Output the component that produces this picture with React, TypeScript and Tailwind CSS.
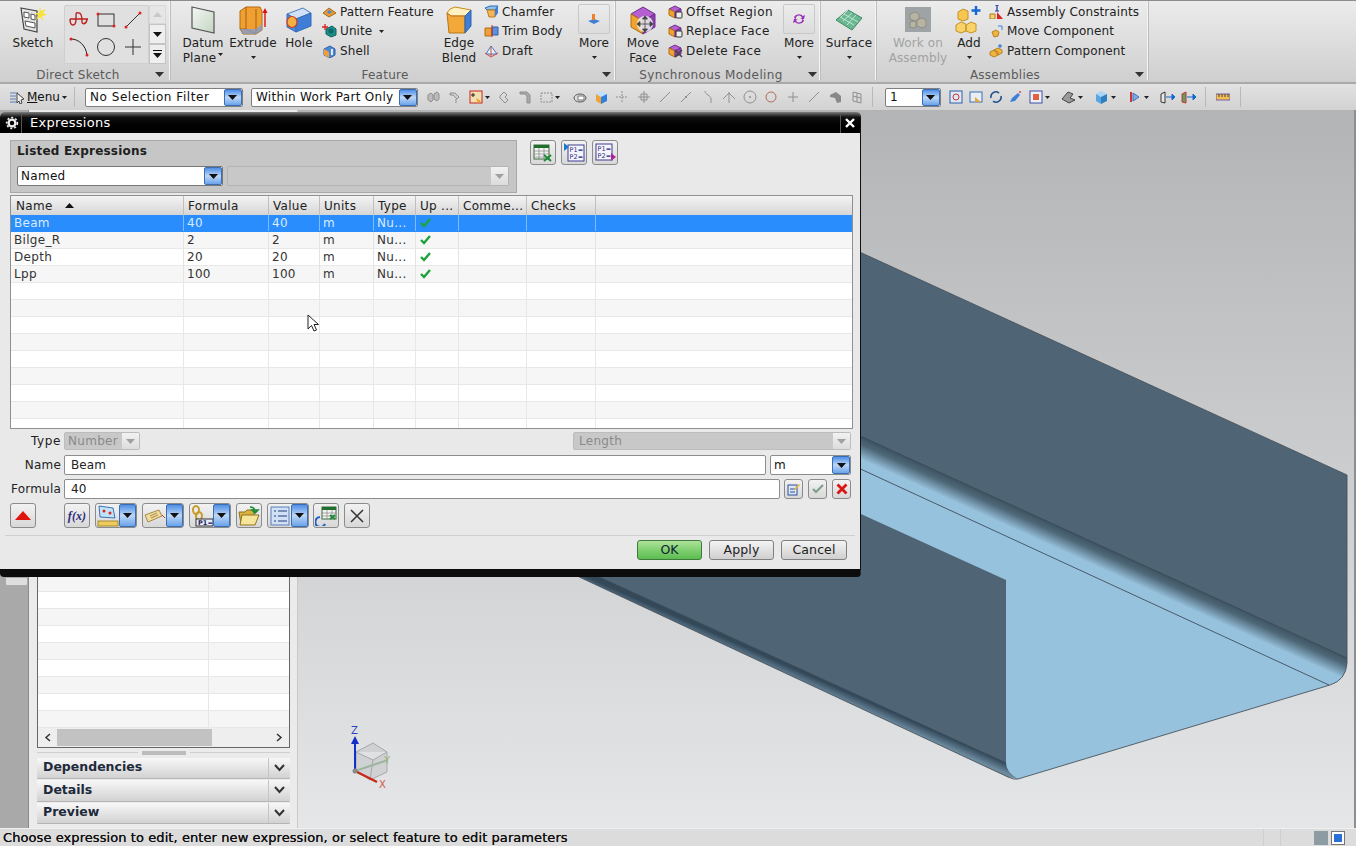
import type { ReactNode } from "react";

const rows = [
  { name: "Beam", formula: "40", value: "40" },
  { name: "Bilge_R", formula: "2", value: "2" },
  { name: "Depth", formula: "20", value: "20" },
  { name: "Lpp", formula: "100", value: "100" },
];
const blankRows = [0, 1, 2, 3, 4, 5, 6, 7, 8];
const panelRows = [0, 1, 2, 3, 4, 5, 6, 7, 8];

function Tri({ color = "#111" }: { color?: string }) {
  return (
    <svg width="9" height="5" viewBox="0 0 9 5">
      <path d="M0 0h9L4.5 5z" fill={color} />
    </svg>
  );
}

function Caret() {
  return (
    <svg width="5" height="3" viewBox="0 0 5 3" className="shrink-0">
      <path d="M0 0h5L2.5 3z" fill="#222" />
    </svg>
  );
}

function BlueDrop({ w = "w-[18px]" }: { w?: string }) {
  return (
    <div className={`${w} self-stretch shrink-0 flex items-center justify-center rounded-[2px] border border-[#3b6db5] bg-linear-to-b from-[#4f8fe6] via-[#bcd6f5] to-[#6aa3ea]`}>
      <Tri />
    </div>
  );
}

function GrayDrop() {
  return (
    <div className="w-[18px] self-stretch shrink-0 flex items-center justify-center border-l border-[#c9c9c9] bg-linear-to-b from-[#f2f2f2] to-[#dcdcdc]">
      <Tri color="#a0a0a0" />
    </div>
  );
}

/* ---------- ribbon icons ---------- */

function SketchIcon() {
  return (
    <svg width="30" height="28" viewBox="0 0 30 28">
      <path d="M3 2l16 3v21L6 23z" fill="#e4e4e4" stroke="#444" strokeWidth="1.2" />
      <path d="M6 6l5 1v5l-5-1zM13 8l4 1v5l-4-1zM7 15l10 2v5L8 20z" fill="#fff" stroke="#555" />
      <path d="M22 0l1 5 5-2-3 4 4 2-5 1 1 5-3-4-4 3 2-5-4-2 5 0z" fill="#f7e33a" />
    </svg>
  );
}

function DatumIcon() {
  return (
    <svg width="26" height="28" viewBox="0 0 26 28">
      <defs>
        <linearGradient id="dp" x1="0" y1="0" x2="1" y2="1">
          <stop offset="0" stopColor="#f4f7f3" />
          <stop offset="1" stopColor="#c3d5c3" />
        </linearGradient>
      </defs>
      <path d="M2 1l22 5v21L2 22z" fill="url(#dp)" stroke="#555" strokeWidth="1.2" />
    </svg>
  );
}

function ExtrudeIcon() {
  return (
    <svg width="32" height="30" viewBox="0 0 32 30">
      <path d="M3 6l6-4h14l2 4v19l-6 4H6l-3-5z" fill="#f0a030" stroke="#b46a10" />
      <path d="M9 2v22M19 4v25M3 24l6 0 10 5" fill="none" stroke="#a85f10" />
      <path d="M3 24l16 0 6-5v6l-6 4H6z" fill="#7d9ed6" opacity=".75" />
      <path d="M28 22V7" stroke="#d11" strokeWidth="1.4" />
      <path d="M25.5 8L28 3l2.5 5z" fill="#d11" />
    </svg>
  );
}

function HoleIcon() {
  return (
    <svg width="28" height="28" viewBox="0 0 28 28">
      <path d="M2 8l16-6 8 5-15 6z" fill="#cfe0f7" stroke="#4a7ec2" />
      <path d="M2 8l9 5v13l-9-5z" fill="#4d8be0" stroke="#356dba" />
      <path d="M11 13l15-6v13l-15 6z" fill="#3f7dd6" stroke="#356dba" />
      <ellipse cx="7" cy="16" rx="5" ry="5.5" fill="#f4b042" stroke="#d03a18" strokeWidth="1.2" />
    </svg>
  );
}

function BlendIcon() {
  return (
    <svg width="28" height="30" viewBox="0 0 28 30">
      <path d="M2 8q2-5 8-6l16 3-6 6H6z" fill="#fff2c0" stroke="#c88a20" />
      <path d="M2 8l4 3h14v17H4z" fill="#f2a93a" stroke="#b87515" />
      <path d="M20 11l6-6v16l-6 7z" fill="#3f7fd8" stroke="#2e63ad" />
    </svg>
  );
}

function MoveFaceIcon() {
  return (
    <svg width="28" height="30" viewBox="0 0 28 30">
      <path d="M2 9l12-7 12 7-12 7z" fill="#b65fd0" stroke="#6e2e8e" />
      <path d="M2 9l12 7v13L2 22z" fill="#f0a32e" stroke="#b06f10" />
      <path d="M14 16l12-7v13l-12 7z" fill="#8a3fb0" stroke="#6e2e8e" />
      <circle cx="16" cy="19" r="8" fill="#e8e8e8" opacity=".9" />
      <path d="M16 12v14M9 19h14M16 11l-2.5 3h5zM16 27l-2.5-3h5zM8 19l3-2.5v5zM24 19l-3-2.5v5z" fill="#444" stroke="#444" strokeWidth=".8" />
    </svg>
  );
}

function SurfaceIcon() {
  return (
    <svg width="28" height="22" viewBox="0 0 28 22">
      <path d="M1 11L13 1l14 8-10 12z" fill="#69b892" stroke="#3d8a66" />
      <path d="M5 8l14 8M9 5l14 8M13 1l-7 7M17 4l-9 8M21 6l-9 10" stroke="#d8efe2" strokeWidth=".8" fill="none" />
    </svg>
  );
}

function WorkOnIcon() {
  return (
    <svg width="26" height="25" viewBox="0 0 26 25">
      <rect width="26" height="25" fill="#9ea3a6" />
      <path d="M5 7l5-2 4 2v5l-4 2-5-2zM12 13l5-2 4 2v6l-4 2-5-2zM5 15l4-1 2 1v5l-3 1-3-1z" fill="#b9b3a2" stroke="#8e8e86" />
    </svg>
  );
}

function AddIcon() {
  return (
    <svg width="28" height="30" viewBox="0 0 28 30">
      <path d="M3 7l5-3 5 2v8l-5 2-5-2z" fill="#f7c64f" stroke="#c6912a" />
      <path d="M1 20l5-3 5 2v7l-5 2-5-2zM11 20l5-3 5 2v7l-5 2-5-2z" fill="#f7d36a" stroke="#c6912a" />
      <path d="M21 1v9M16.5 5.5h9" stroke="#1469d2" strokeWidth="2.4" />
    </svg>
  );
}

function MoreBox({ children }: { children: ReactNode }) {
  return (
    <div className="w-[32px] h-[30px] flex items-center justify-center rounded-[2px] border border-[#c8c8c8] bg-linear-to-b from-[#ececec] to-[#dcdcdc]">
      {children}
    </div>
  );
}

function Small({ kind }: { kind: string }) {
  const common = { width: 15, height: 14, viewBox: "0 0 15 14" };
  switch (kind) {
    case "pattern":
      return (
        <svg {...common}>
          <path d="M1 8l6-5 7 5-7 4z" fill="#e69a32" stroke="#a9691a" />
          <path d="M5 7l2-2 3 2-3 2z" fill="#4c86d8" />
        </svg>
      );
    case "unite":
      return (
        <svg {...common}>
          <path d="M4 5l6-3 4 3v6l-5 2-5-3z" fill="#1c8f8a" stroke="#0d5f5c" />
          <circle cx="9" cy="7" r="2.6" fill="#0d6a66" />
          <path d="M3 0v6M0 3h6" stroke="#d22" strokeWidth="1.3" />
        </svg>
      );
    case "shell":
      return (
        <svg {...common}>
          <path d="M2 5l6-3 5 3v6l-5 3-6-3z" fill="#4d88d8" stroke="#2d5fa6" />
          <path d="M2 5l5 3v6l-5-3z" fill="#ef9f38" />
          <path d="M9 5h2v6H9z" fill="#e4e9f3" />
        </svg>
      );
    case "chamfer":
      return (
        <svg {...common}>
          <path d="M1 3l5-2h8l-3 4H3z" fill="#8fc0ea" stroke="#2f6db5" />
          <path d="M3 5h8v7H5z" fill="#f4b458" stroke="#c07c18" />
          <path d="M11 5l3-4v7l-3 4z" fill="#3f7fd8" />
        </svg>
      );
    case "trim":
      return (
        <svg {...common}>
          <path d="M1 4h7v8H1z" fill="#ef9f38" stroke="#b06f10" />
          <path d="M8 3h6v8H8z" fill="#5b93de" stroke="#2d5fa6" />
          <path d="M8 1v12" stroke="#d22" />
        </svg>
      );
    case "draft":
      return (
        <svg {...common}>
          <path d="M2 10L7 2l6 8z" fill="#eef2f8" stroke="#4278c2" />
          <path d="M7 2v10M1 9l6 4 7-4" fill="none" stroke="#cf4a4a" />
        </svg>
      );
    case "offset":
    case "replace":
    case "delete":
      return (
        <svg {...common}>
          <path d="M1 4l6-3 6 3-6 3z" fill="#b65fd0" stroke="#6e2e8e" />
          <path d="M1 4l6 3v6l-6-3z" fill="#f0a32e" stroke="#b06f10" />
          <path d="M7 7l6-3v6l-6 3z" fill="#9a48bc" stroke="#6e2e8e" />
          {kind === "delete" ? (
            <path d="M7 6l7 7M14 6l-7 7" stroke="#444" strokeWidth="1.5" />
          ) : (
            <rect x="8" y="7" width="6" height="6" rx="1" fill="#eee" stroke="#333" />
          )}
        </svg>
      );
    case "constraints":
      return (
        <svg {...common}>
          <path d="M6 0h4M8 0v6M6 6h4" stroke="#1c2f9e" strokeWidth="1.2" />
          <path d="M1 9h5v5H1z" fill="#f7d36a" stroke="#a87b1e" />
          <path d="M8 14V7l6 7z" fill="#d22" />
        </svg>
      );
    case "move":
      return (
        <svg {...common}>
          <path d="M3 8l4-2 3 2-1 4-4 1z" fill="#efb53e" stroke="#b58020" />
          <path d="M9 2h4v4" fill="none" stroke="#3f7fd8" />
        </svg>
      );
    default:
      return (
        <svg {...common}>
          <path d="M1 8l4-2 4 2v3l-4 2-4-2zM5 6l4-2 4 2v3l-4 2z" fill="#efb53e" stroke="#b58020" />
          <path d="M11 0v4M9 2h4" stroke="#1469d2" />
        </svg>
      );
  }
}

/* ---------- ribbon pieces ---------- */

function Big({ w, icon, lines, caret, caretInline, ml = 0, dim }: { w: number; icon: ReactNode; lines: string[]; caret?: boolean; caretInline?: boolean; ml?: number; dim?: boolean }) {
  return (
    <div className="flex flex-col items-center shrink-0" style={{ width: w, marginLeft: ml }}>
      <div className="h-[31px] mt-[3px] flex items-center justify-center">{icon}</div>
      <div className={`mt-[1px] text-center leading-[14.5px] whitespace-nowrap ${dim ? "text-[#a2a2a2]" : "text-[#222]"}`}>
        {lines.map((l, i) => (
          <div key={l} className="flex items-center justify-center gap-[2px]">
            {l}
            {caretInline && i === lines.length - 1 && <span className="mb-[6px]"><Caret /></span>}
          </div>
        ))}
      </div>
      {caret && <div className="mt-[5px] flex"><Caret /></div>}
    </div>
  );
}

function List({ items, w, ml = 0, wide }: { items: { k: string; t: string; caret?: boolean }[]; w: number; ml?: number; wide?: boolean }) {
  return (
    <div className={`flex flex-col mt-[1px] shrink-0 ${wide ? "tracking-[0.45px]" : ""}`} style={{ width: w, marginLeft: ml }}>
      {items.map((it) => (
        <div key={it.t} className="h-[19.5px] flex items-center gap-[3px] text-[#222] whitespace-nowrap">
          <Small kind={it.k} />
          {it.t}
          {it.caret && <span className="ml-[4px] flex"><Caret /></span>}
        </div>
      ))}
    </div>
  );
}

function GroupLabel({ label, box, gap, wide }: { label: string; box: number; gap: number; wide?: boolean }) {
  return (
    <div className="h-[17px] shrink-0 flex items-center text-[#5a5a5a]">
      <span className={`text-center whitespace-nowrap ${wide ? "tracking-[0.4px]" : "tracking-[0.25px]"}`} style={{ width: box }}>{label}</span>
      <span style={{ marginLeft: gap }} className="flex"><Tri color="#333" /></span>
    </div>
  );
}

function Group({ w, children, label }: { w: number; children: ReactNode; label?: ReactNode }) {
  return (
    <div className="flex flex-col shrink-0 border-r border-[#f4f4f4] shadow-[1px_0_0_#bdbdbd] mr-[2px] mb-[2px]" style={{ width: w }}>
      <div className="h-[65px] shrink-0 flex items-start">{children}</div>
      {label}
    </div>
  );
}

function Ribbon() {
  return (
    <div className="h-[84px] shrink-0 flex border-t border-[#8c8c8c] border-b-2 border-b-[#a9a9a9] bg-linear-to-b from-[#ececec] to-[#cfcfcf] text-[12px] tracking-[0.1px]">
      <Group w={170} label={<GroupLabel label="Direct Sketch" box={156} gap={-1} />}>
        <Big w={46} ml={10} icon={<SketchIcon />} lines={["Sketch"]} />
        <div className="ml-[8px] mt-[4px] w-[85px] h-[59px] pb-[3px] pr-[2px] grid grid-cols-3 grid-rows-2 place-items-center rounded-[2px] border border-[#cfcfcf] bg-[#e0e0e0]">
          <svg width="20" height="20" viewBox="0 0 20 20"><path d="M1 9c0 8 6 8 6 0S7 3 10 3s3 6 3 9 5 2 5-3M1 9h18" fill="none" stroke="#b22" strokeWidth="1.4" /></svg>
          <svg width="20" height="16" viewBox="0 0 20 16"><rect x="2" y="2" width="16" height="12" fill="none" stroke="#333" /><circle cx="2" cy="2" r="1.5" fill="#d22" /><circle cx="18" cy="14" r="1.5" fill="#d22" /></svg>
          <svg width="18" height="18" viewBox="0 0 18 18"><path d="M2 16L16 2" stroke="#333" /><circle cx="2" cy="16" r="1.5" fill="#d22" /><circle cx="16" cy="2" r="1.5" fill="#d22" /></svg>
          <svg width="20" height="20" viewBox="0 0 20 20"><path d="M2 2c8 0 15 7 16 16" fill="none" stroke="#222" /><circle cx="2" cy="2" r="1.5" fill="#d22" /><circle cx="18" cy="18" r="1.5" fill="#d22" /></svg>
          <svg width="20" height="20" viewBox="0 0 20 20"><circle cx="10" cy="10" r="8.5" fill="none" stroke="#333" /></svg>
          <svg width="18" height="18" viewBox="0 0 18 18"><path d="M9 1v16M1 9h16" stroke="#333" /></svg>
        </div>
        <div className="w-[17px] mt-[4px] h-[59px] flex flex-col">
          <div className="h-[19px] flex items-center justify-center bg-[#e6e6e6] border border-[#d8d8d8]"><span className="rotate-180 flex"><Tri color="#c8c8c8" /></span></div>
          <div className="h-[20px] flex items-center justify-center bg-[#eeeeee] border border-[#c4c4c4]"><Tri /></div>
          <div className="h-[20px] flex flex-col items-center justify-center bg-[#eeeeee] border border-[#c4c4c4]"><div className="w-[9px] h-[1px] bg-[#111] mb-[2px]" /><Tri /></div>
        </div>
      </Group>
      <Group w={443} label={<GroupLabel label="Feature" box={426} gap={4} />}>
        <Big w={42} ml={10} icon={<DatumIcon />} lines={["Datum", "Plane"]} caretInline />
        <Big w={48} ml={5} icon={<ExtrudeIcon />} lines={["Extrude"]} caret />
        <Big w={32} ml={6} icon={<HoleIcon />} lines={["Hole"]} />
        <List w={115} ml={7} items={[{ k: "pattern", t: "Pattern Feature" }, { k: "unite", t: "Unite", caret: true }, { k: "shell", t: "Shell" }]} />
        <Big w={38} ml={3} icon={<BlendIcon />} lines={["Edge", "Blend"]} />
        <List w={91} ml={6} items={[{ k: "chamfer", t: "Chamfer" }, { k: "trim", t: "Trim Body" }, { k: "draft", t: "Draft" }]} />
        <div className="flex flex-col items-center w-[34px] ml-[2px] mt-[3px]">
          <MoreBox><svg width="14" height="14" viewBox="0 0 14 14"><path d="M1 9l6-2 6 2-6 3z" fill="#3f7fd8" /><path d="M5 2h3v6H5z" fill="#ef7f28" /></svg></MoreBox>
          <div className="mt-[2px] leading-[14.5px] text-[#222]">More</div>
          <div className="mt-[5px] flex"><Caret /></div>
        </div>
      </Group>
      <Group w={203} label={<GroupLabel label="Synchronous Modeling" box={188} gap={3} wide />}>
        <Big w={36} ml={8} icon={<MoveFaceIcon />} lines={["Move", "Face"]} />
        <List w={114} ml={7} wide items={[{ k: "offset", t: "Offset Region" }, { k: "replace", t: "Replace Face" }, { k: "delete", t: "Delete Face" }]} />
        <div className="flex flex-col items-center w-[34px] mt-[3px]">
          <MoreBox><svg width="14" height="12" viewBox="0 0 14 12"><path d="M2 5a5 4 0 0 1 9-2l2-1-1 4H8l2-1a3 3 0 0 0-6 1zM12 7a5 4 0 0 1-9 2l-2 1 1-4h4L4 7a3 3 0 0 0 6-1z" fill="#9a30b8" /></svg></MoreBox>
          <div className="mt-[2px] leading-[14.5px] text-[#222]">More</div>
          <div className="mt-[5px] flex"><Caret /></div>
        </div>
      </Group>
      <Group w={54}>
        <Big w={54} icon={<SurfaceIcon />} lines={["Surface"]} caret />
      </Group>
      <Group w={270} label={<GroupLabel label="Assemblies" box={254} gap={3} />}>
        <Big w={60} ml={10} dim icon={<WorkOnIcon />} lines={["Work on", "Assembly"]} />
        <Big w={34} ml={4} icon={<AddIcon />} lines={["Add"]} caret />
        <List w={152} ml={3} items={[{ k: "constraints", t: "Assembly Constraints" }, { k: "move", t: "Move Component" }, { k: "patternc", t: "Pattern Component" }]} />
      </Group>
    </div>
  );
}

/* ---------- toolbar ---------- */

function Glyph({ k }: { k: number }) {
  const s = "#8f8f8f";
  const paths: ReactNode[] = [
    <path key="a" d="M2 10V5l3-2 2 2v5l-2 2zM8 9V4l3-2 2 2v5l-2 2z" fill="#bbb" stroke={s} />,
    <path key="b" d="M3 3h5l4 4-2 2-4-4H3zM9 9v4" fill="#cfcfcf" stroke={s} />,
    <g key="c"><rect x="1" y="1" width="12" height="12" fill="#f3e0b0" stroke="#c22" /><path d="M4 3v4M2 5h4" stroke="#222" /><path d="M7 8l5 3-3 2z" fill="#e9a326" /></g>,
    <path key="d" d="M3 6l4-4 3 3-2 2 3 3-3 3-5-5z" fill="none" stroke={s} />,
    <path key="e" d="M2 4h5l2 2v7h3V5L9 2H2z" fill="#aaa" stroke={s} />,
    <rect key="f" x="2" y="3" width="11" height="9" fill="none" stroke={s} strokeDasharray="2 1" />,
    <g key="g"><ellipse cx="7" cy="8" rx="6" ry="4" fill="#ddd" stroke="#555" /><path d="M5 6h6v4H5z" fill="#fff" stroke="#777" /></g>,
    <g key="h"><path d="M2 4l5-3 6 3-6 3z" fill="#bfe0ff" /><path d="M2 4l5 3v7l-5-3z" fill="#f1a433" /><path d="M7 7l6-3v7l-6 3z" fill="#2f7ee0" /></g>,
    <path key="i" d="M7 1v12M1 7h12" stroke={s} strokeDasharray="2 1" />,
    <path key="j" d="M7 1v12M1 7h12M4 4h6v6H4z" fill="none" stroke={s} />,
    <path key="k" d="M2 12L12 2" stroke={s} />,
    <path key="l" d="M2 12L12 2M6 6l2 2" stroke={s} />,
    <path key="m" d="M4 1c0 4 6 4 6 8v4" fill="none" stroke={s} />,
    <path key="n" d="M7 2v11M1 9l6-6 6 6" fill="none" stroke={s} />,
    <g key="o"><circle cx="7" cy="7" r="6" fill="none" stroke={s} /><circle cx="7" cy="7" r="1" fill={s} /></g>,
    <circle key="p" cx="7" cy="7" r="5" fill="none" stroke="#b06a5a" />,
    <path key="q" d="M7 2v10M2 7h10" stroke={s} />,
    <path key="r" d="M2 12L12 2" stroke={s} />,
    <path key="s" d="M2 5l6-3 5 4v6l-4 1-2-5-5-1z" fill="#888" />,
    <path key="t" d="M3 2l8 2v9l-8-2zM3 6l8 2M7 3v9" fill="none" stroke={s} />,
  ];
  return <svg width="14" height="14" viewBox="0 0 14 14">{paths[k]}</svg>;
}

function SelectBox({ text, w, ml = 0, track }: { text: string; w: number; ml?: number; track: string }) {
  return (
    <div className="h-[19px] flex items-center rounded-[2px] border border-[#7f7f7f] bg-white text-[#111] pl-[4px] shrink-0" style={{ width: w, marginLeft: ml }}>
      <span className={`flex-1 whitespace-nowrap ${track}`}>{text}</span>
      <BlueDrop />
    </div>
  );
}

function Sep({ ml = 0 }: { ml?: number }) {
  return <div className="w-[1px] h-[20px] bg-[#b8b8b8] shrink-0" style={{ marginLeft: ml }} />;
}

const RIGHT_ICONS: ReactNode[] = [
  <svg key="a" width="14" height="14" viewBox="0 0 14 14"><rect x="1" y="1" width="12" height="12" fill="#dfe8f5" stroke="#2d5fa6" /><circle cx="7" cy="7" r="3" fill="none" stroke="#c33" /></svg>,
  <svg key="b" width="14" height="14" viewBox="0 0 14 14"><rect x="1" y="2" width="12" height="10" fill="#e8edf6" stroke="#3d6fb8" /><path d="M6 7l6 5H6z" fill="#e3a63a" /></svg>,
  <svg key="c" width="14" height="14" viewBox="0 0 14 14"><path d="M2 8a5 5 0 0 1 8-5M12 6a5 5 0 0 1-8 5" fill="none" stroke="#224e8f" strokeWidth="1.6" /></svg>,
  <svg key="d" width="14" height="14" viewBox="0 0 14 14"><path d="M1 12l2-4 6-5 2 2-5 6z" fill="#3f7fd8" /><circle cx="11" cy="2" r="1" fill="#d44" /></svg>,
  <svg key="e" width="14" height="14" viewBox="0 0 14 14"><rect x="1" y="1" width="12" height="12" fill="#eef0f8" stroke="#3d4fa8" /><rect x="4" y="4" width="6" height="6" fill="#e3603a" /></svg>,
  <svg key="f" width="15" height="14" viewBox="0 0 15 14"><path d="M1 9l6-7 5 2-3 4 5 2-6 3z" fill="#9a9a9a" stroke="#444" /></svg>,
  <svg key="g" width="15" height="14" viewBox="0 0 15 14"><path d="M2 4l5-3 6 3-6 3z" fill="#a8d4f5" /><path d="M2 4l5 3v7l-5-3z" fill="#5aa5e0" /><path d="M7 7l6-3v7l-6 3z" fill="#2f7ec0" /></svg>,
  <svg key="h" width="15" height="14" viewBox="0 0 15 14"><path d="M4 2v10" stroke="#c33" strokeWidth="2" /><path d="M6 3l6 4-6 4z" fill="#7ab0e6" stroke="#3d6fb8" /></svg>,
  <svg key="i" width="15" height="14" viewBox="0 0 15 14"><path d="M1 4l4-2v11l-4-1z" fill="#e8e8e8" stroke="#333" /><path d="M6 7h6M12 4l3 3-3 3z" fill="#1469d2" stroke="#1469d2" /></svg>,
  <svg key="j" width="15" height="14" viewBox="0 0 15 14"><path d="M1 4l4-2v11l-4-1z" fill="#5aa064" stroke="#c33" /><path d="M6 7h6M12 4l3 3-3 3z" fill="#1469d2" stroke="#1469d2" /></svg>,
];

function Toolbar() {
  return (
    <div className="h-[26px] shrink-0 flex items-center bg-linear-to-b from-[#e2e2e2] to-[#d2d2d2] text-[12px]">
      <svg width="15" height="13" viewBox="0 0 15 13" className="ml-[10px]"><path d="M0 2h8M0 5h6M0 8h6M0 11h8" stroke="#5a7fb5" /><path d="M7 2l7 6-3 1 1 3-2 1-1-3-2 2z" fill="#eee" stroke="#444" /></svg>
      <span className="ml-[2px] text-[#111]"><span className="underline">M</span>enu</span>
      <span className="ml-[2px] flex"><Caret /></span>
      <Sep ml={7} />
      <SelectBox text="No Selection Filter" w={158} ml={10} track="tracking-[0.55px]" />
      <SelectBox text="Within Work Part Only" w={167} ml={8} track="tracking-[0.3px]" />
      <div className="ml-[8px] flex items-center w-[446px] gap-[7.3px]">
        {[0, 1, 2, 3, 4, 5, 6, 7, 8, 9, 10, 11, 12, 13, 14, 15, 16, 17, 18, 19].map((k) => (
          <span key={k} className={`flex items-center gap-[2px] ${k === 5 ? "mr-[5px]" : ""}`}>
            <Glyph k={k} />
            {(k === 2 || k === 5) && <Caret />}
          </span>
        ))}
      </div>
      <Sep ml={0} />
      <div className="ml-[12px] w-[56px] h-[19px] flex items-center rounded-[2px] border border-[#7f7f7f] bg-white pl-[4px] text-[#111] shrink-0">
        <span className="flex-1">1</span>
        <BlueDrop />
      </div>
      <div className="ml-[8px] flex items-center gap-[6px] w-[256px]">
        {RIGHT_ICONS.map((ic, i) => (
          <span key={i} className={`flex items-center gap-[2px] ${i >= 4 && i <= 7 ? "mr-[5px]" : ""}`}>
            {ic}
            {i >= 4 && i <= 7 && <Caret />}
          </span>
        ))}
      </div>
      <Sep ml={0} />
      <svg width="14" height="12" viewBox="0 0 14 12" className="ml-[10px]"><rect x="0" y="3" width="14" height="6" fill="#f1c04e" stroke="#7d5aa8" /><path d="M3 3v3M6 3v3M9 3v3M12 3v3" stroke="#444" /></svg>
      <Sep ml={10} />
    </div>
  );
}

/* ---------- left pane ---------- */

function Accordion({ label }: { label: string }) {
  return (
    <div className="h-[21.5px] mb-[1px] flex items-center rounded-[1px] bg-linear-to-b from-[#f8f8f8] to-[#d2d2d2] border-b border-[#b5b5b5]">
      <span className="flex-1 pl-[6px] font-bold text-[#1d2a3a] text-[12.5px]">{label}</span>
      <span className="w-[22px] self-stretch flex items-center justify-center border-l border-[#c4c4c4]">
        <svg width="11" height="8" viewBox="0 0 11 8"><path d="M1 1l4.5 5L10 1" fill="none" stroke="#333" strokeWidth="2" /></svg>
      </span>
    </div>
  );
}

function LeftPane() {
  return (
    <div className="w-[298px] shrink-0 flex border-r border-[#c9c9c9]">
      <div className="w-[29px] shrink-0 bg-[#a9a9a9] border-r border-[#8a8a8a]" />
      <div className="flex-1 flex flex-col justify-end bg-[#ebebeb] pl-[8px] pr-[7px] pb-[3px]">
        <div className="border border-[#666] bg-white">
          {panelRows.map((r) => (
            <div key={r} className={`h-[17px] flex border-b border-[#e8e8e8] ${r % 2 === 1 ? "bg-white" : "bg-[#f5f5f5]"}`}>
              <div className="w-[171px] border-r border-[#e6e6e6]" />
            </div>
          ))}
          <div className="h-[19px] flex items-center bg-[#eeeeee]">
            <span className="w-[19px] text-center">
              <svg width="7" height="9" viewBox="0 0 7 9" className="inline"><path d="M6 1L2 4.5 6 8" fill="none" stroke="#333" strokeWidth="1.5" /></svg>
            </span>
            <div className="w-[155px] h-[17px] bg-[#c2c2c2]" />
            <span className="flex-1" />
            <span className="w-[19px] text-center">
              <svg width="7" height="9" viewBox="0 0 7 9" className="inline"><path d="M1 1l4 3.5L1 8" fill="none" stroke="#333" strokeWidth="1.5" /></svg>
            </span>
          </div>
        </div>
        <div className="h-[10px] flex items-center justify-center gap-[4px]">
          <div className="flex-1 h-[1px] bg-[#cfcfcf]" />
          <div className="w-[44px] h-[4px] bg-[#bcbcbc]" />
          <div className="flex-1 h-[1px] bg-[#cfcfcf]" />
        </div>
        <Accordion label="Dependencies" />
        <Accordion label="Details" />
        <Accordion label="Preview" />
      </div>
    </div>
  );
}

/* ---------- viewport ---------- */

function Viewport() {
  return (
    <div className="flex-1 relative bg-linear-to-b from-[#b3b4b6] via-[#d6d7d8] via-70% to-[#e5e6e7] border-r-2 border-[#8d8e90]">
      <svg className="absolute inset-0" width="1056" height="718" viewBox="298 110 1056 718">
        <defs>
          <linearGradient id="fillet" gradientUnits="userSpaceOnUse" x1="860" y1="436" x2="847.6" y2="463.3">
            <stop offset="0" stopColor="#3c5363" />
            <stop offset="0.25" stopColor="#4f6878" />
            <stop offset="0.7" stopColor="#97c2de" />
          </linearGradient>
          <linearGradient id="fillet2" gradientUnits="userSpaceOnUse" x1="950" y1="738" x2="946" y2="747">
            <stop offset="0" stopColor="#33495a" />
            <stop offset="1" stopColor="#6d8a9f" />
          </linearGradient>
        </defs>
        <path d="M700 179L1347 475V658L700 363Z" fill="#4f6474" />
        <path d="M700 363L1347 658V663Q1346 680 1330 685L700 395Z" fill="url(#fillet)" />
        <path d="M700 395L1330 685L1018 779Q1012 778 1006 770L575 400Z" fill="#97c2de" />
        <path d="M575 384L1006 580V763L575 566Z" fill="#4f6474" />
        <path d="M575 566L1006 763Q1006 772 1018 779L1008 777L575 575Z" fill="url(#fillet2)" />
        <path d="M700 363L1347 658M700 395L1329 685" stroke="#2c3f4d" strokeWidth="0.8" fill="none" />
        <path d="M575 566L1006 763" stroke="#2c3f4d" strokeWidth="0.8" fill="none" />
        <path d="M575 575L1008 777Q1014 780 1018 779L1330 685Q1346 680 1347 663V475L700 179" stroke="#48545c" strokeWidth="0.9" fill="none" />
        <path d="M373 743l14 9v20l-17 8-14-10v-18zM356 752l17 8 14-8M373 760l-3 20" fill="#c4c6c8" fillOpacity=".6" stroke="#a6a8aa" strokeWidth="1" />
        <path d="M355 771L388 760" stroke="#9db59f" strokeWidth="2" />
        <path d="M355 771V742" stroke="#1230c8" strokeWidth="2" />
        <path d="M351 744l4-8 4 8z" fill="#1230c8" />
        <path d="M355 771L377 782" stroke="#c8281c" strokeWidth="2.5" />
        <circle cx="355" cy="771" r="2.5" fill="#888" />
        <text x="351" y="734" fontSize="10" fill="#2a3fc8" fontFamily="DejaVu Sans">Z</text>
        <text x="379" y="788" fontSize="10" fill="#d0584c" fontFamily="DejaVu Sans">X</text>
        <text x="384" y="764" fontSize="10" fill="#9fb57a" fontFamily="DejaVu Sans">Y</text>
      </svg>
    </div>
  );
}

/* ---------- dialog ---------- */

function ToolBtn({ children, w = "w-[26px]", h = "h-[25px]" }: { children?: ReactNode; w?: string; h?: string }) {
  return (
    <div className={`${w} ${h} shrink-0 flex items-center justify-center rounded-[3px] border border-[#8b8b8b] bg-linear-to-b from-[#f2f2f2] to-[#d8d8d8]`}>
      {children}
    </div>
  );
}

function Combo({ children }: { children: ReactNode }) {
  return (
    <div className="w-[42px] h-[25px] shrink-0 flex rounded-[3px] border border-[#8b8b8b] bg-linear-to-b from-[#f2f2f2] to-[#d8d8d8]">
      <div className="flex-1 flex items-center justify-center">{children}</div>
      <BlueDrop w="w-[17px]" />
    </div>
  );
}

const cols = [173, 85, 51, 54, 42, 43, 68, 69];
const heads = ["Name", "Formula", "Value", "Units", "Type", "Up ...", "Comme...", "Checks"];

function ExprTable() {
  return (
    <div className="mx-[10px] mt-[2px] w-[843px] h-[234px] border border-[#8f8f8f] bg-white overflow-hidden shrink-0">
      <div className="h-[19px] flex bg-linear-to-b from-[#f4f4f4] to-[#d6d6d6] tracking-[0.3px]">
        {heads.map((h, i) => (
          <div key={h} className={`flex items-center border-r border-[#c0c0c0] whitespace-nowrap text-[#222] ${i === 0 ? "pl-[5px]" : "pl-[4px]"}`} style={{ width: cols[i] }}>
            {h}
            {i === 0 && <span className="ml-[12px] mb-[1px] rotate-180 flex"><Tri color="#111" /></span>}
          </div>
        ))}
        <div className="flex-1" />
      </div>
      {rows.map((r, i) => {
        const sel = i === 0;
        const line = sel ? "border-[#7fbcfb]" : "border-[#e4e4e4]";
        const tx = sel ? "text-[#d9ebff]" : "text-[#333]";
        return (
          <div key={r.name} className={`h-[17px] flex border-b tracking-[0.3px] ${sel ? "bg-[#2a8dfd] border-[#2a8dfd]" : i % 2 === 1 ? "bg-[#f6f6f6] border-[#e8e8e8]" : "bg-white border-[#e8e8e8]"} ${tx}`}>
            {[r.name, r.formula, r.value, "m", "Nu...", "", "", ""].map((c, j) => (
              <div key={j} className={`flex items-center pl-[3px] border-r ${line}`} style={{ width: cols[j] }}>
                {j === 5 ? (
                  <svg width="11" height="10" viewBox="0 0 11 10" className="ml-[1px]"><path d="M1 5l3 3 6-7" fill="none" stroke="#1ea23a" strokeWidth="2.4" /></svg>
                ) : c}
              </div>
            ))}
          </div>
        );
      })}
      {blankRows.map((b) => (
        <div key={b} className={`h-[17px] flex border-b border-[#e8e8e8] ${b % 2 === 1 ? "bg-[#f6f6f6]" : "bg-white"}`}>
          {cols.map((w, j) => (
            <div key={j} className="border-r border-[#e8e8e8]" style={{ width: w }} />
          ))}
        </div>
      ))}
    </div>
  );
}

function Field({ label, children }: { label: string; children: ReactNode }) {
  return (
    <div className="flex items-center">
      <span className="w-[61px] text-right text-[#222] whitespace-nowrap tracking-[0.2px]">{label}</span>
      <div className="ml-[3px] flex items-center">{children}</div>
    </div>
  );
}

function Dialog() {
  return (
    <div className="absolute left-0 top-[112px] w-[861px] h-[465px] flex flex-col rounded-t-[5px] rounded-b-[4px] overflow-hidden bg-[#e9e9e9] border-b-[8px] border-b-[#0c0c0c] border-r-[1px] border-r-[#111] text-[12px] tracking-[0.1px]">
      <div className="h-[21px] shrink-0 flex items-center bg-linear-to-b from-[#808080] via-[#111] via-25% to-[#000] text-white">
        <svg width="14" height="14" viewBox="0 0 14 14" className="ml-[5px]">
          <circle cx="7" cy="7" r="3.4" fill="none" stroke="#eee" strokeWidth="2.4" />
          <circle cx="7" cy="7" r="5.4" fill="none" stroke="#eee" strokeWidth="1.6" strokeDasharray="2 2" />
        </svg>
        <div className="ml-[2px] w-[1px] h-[20px] bg-[#555]" />
        <span className="ml-[8px] text-[13px] font-medium tracking-[0.3px]">Expressions</span>
        <span className="flex-1" />
        <div className="w-[1px] h-[20px] bg-[#555]" />
        <svg width="12" height="12" viewBox="0 0 12 12" className="mx-[3px] mr-[4px]"><path d="M2 2l8 8M10 2l-8 8" stroke="#fff" strokeWidth="2.4" /></svg>
      </div>

      <div className="mt-[7px] flex shrink-0">
        <div className="ml-[10px] w-[507px] h-[53px] border border-[#a8a8a8] bg-[#c6c6c6] px-[6px] pt-[2px]">
          <div className="font-semibold text-[#202020] leading-[17px] tracking-[0.2px]">Listed Expressions</div>
          <div className="mt-[6px] flex gap-[4px]">
            <div className="w-[206px] h-[20px] flex items-center rounded-[2px] border border-[#777] bg-white pl-[3px] text-[#111]">
              <span className="flex-1 tracking-[0.3px]">Named</span>
              <BlueDrop />
            </div>
            <div className="w-[282px] h-[20px] flex rounded-[2px] border border-[#b4b4b4] bg-[#c8c8c8]">
              <span className="flex-1" />
              <GrayDrop />
            </div>
          </div>
        </div>
        <div className="ml-[13px] flex gap-[5px]">
          <ToolBtn><svg width="20" height="18" viewBox="0 0 20 18"><rect x="1" y="1" width="15" height="14" fill="#f2f2f2" stroke="#3a6a3a" /><rect x="1" y="1" width="15" height="3" fill="#1e6e2e" /><path d="M1 7h15M1 10h15M1 13h15M6 4v11M11 4v11" stroke="#777" strokeWidth=".6" /><path d="M11 11l7 6M18 11l-7 6" stroke="#1e8a3a" strokeWidth="2" /></svg></ToolBtn>
          <ToolBtn><svg width="21" height="19" viewBox="0 0 21 19"><rect x="4" y="2" width="16" height="16" fill="#f4f4fb" stroke="#3d3d90" /><text x="5.5" y="9" fontSize="6.5" fill="#2a2a80" fontFamily="DejaVu Sans">P1=</text><text x="5.5" y="16" fontSize="6.5" fill="#2a2a80" fontFamily="DejaVu Sans">P2=</text><path d="M0 0l5 4-5 4z" fill="#1b7bc8" /></svg></ToolBtn>
          <ToolBtn><svg width="21" height="19" viewBox="0 0 21 19"><rect x="1" y="1" width="16" height="16" fill="#f4f4fb" stroke="#3d3d90" /><text x="2.5" y="8" fontSize="6.5" fill="#2a2a80" fontFamily="DejaVu Sans">P1=</text><text x="2.5" y="15" fontSize="6.5" fill="#2a2a80" fontFamily="DejaVu Sans">P2=</text><path d="M16 10l5 4-5 4z" fill="#b0209a" /></svg></ToolBtn>
        </div>
      </div>

      <ExprTable />

      <div className="mt-[3px] h-[18px] flex items-center shrink-0">
        <span className="w-[61px] text-right text-[#222] tracking-[0.6px]">Type</span>
        <div className="ml-[3px] w-[76px] h-[18px] flex rounded-[2px] border border-[#bcbcbc] bg-[#c8c8c8] text-[#8a8a8a] pl-[3px] items-center">
          <span className="flex-1 tracking-[0.3px]">Number</span>
          <GrayDrop />
        </div>
        <div className="ml-[433px] w-[278px] h-[18px] flex rounded-[2px] border border-[#bcbcbc] bg-[#c8c8c8] text-[#8a8a8a] pl-[5px] items-center">
          <span className="flex-1 tracking-[0.3px]">Length</span>
          <GrayDrop />
        </div>
      </div>

      <div className="mt-[5px] h-[20px] shrink-0">
        <Field label="Name">
          <div className="w-[702px] h-[20px] shrink-0 flex items-center rounded-[2px] border border-[#8d8d8d] bg-white pl-[6px] text-[#222]">Beam</div>
          <div className="ml-[4px] w-[81px] h-[20px] shrink-0 flex items-center rounded-[2px] border border-[#8d8d8d] bg-white pl-[3px] text-[#111]">
            <span className="flex-1">m</span>
            <BlueDrop />
          </div>
        </Field>
      </div>

      <div className="mt-[4px] h-[20px] shrink-0">
        <Field label="Formula">
          <div className="w-[716px] h-[20px] shrink-0 flex items-center rounded-[2px] border border-[#8d8d8d] bg-white pl-[6px] text-[#222]">40</div>
          <div className="ml-[4px] flex gap-[5px]">
            <ToolBtn w="w-[19px]" h="h-[20px]"><svg width="13" height="13" viewBox="0 0 13 13"><rect x="1" y="2" width="9" height="10" fill="#dfe6f5" stroke="#2d4f9e" /><path d="M3 6h5M3 9h5" stroke="#2d4f9e" /><path d="M7 6l5-5 1 1-5 5z" fill="#e8b32e" /></svg></ToolBtn>
            <ToolBtn w="w-[19px]" h="h-[20px]"><svg width="12" height="10" viewBox="0 0 12 10"><path d="M1 5l3 3 7-7" fill="none" stroke="#7fa08a" strokeWidth="2.2" /></svg></ToolBtn>
            <ToolBtn w="w-[19px]" h="h-[20px]"><svg width="12" height="12" viewBox="0 0 12 12"><path d="M1.5 1.5l9 9M10.5 1.5l-9 9" stroke="#dc1414" strokeWidth="2.8" /></svg></ToolBtn>
          </div>
        </Field>
      </div>

      <div className="mt-[4px] flex items-center shrink-0">
        <div className="ml-[10px]"><ToolBtn><svg width="16" height="9" viewBox="0 0 16 9"><path d="M8 0l8 9H0z" fill="#e0140c" /></svg></ToolBtn></div>
        <div className="ml-[28px]"><ToolBtn><span className="font-['Liberation_Serif',serif] italic font-bold text-[12px] text-[#2c2c7c]">f(x)</span></ToolBtn></div>
        <div className="ml-[5px]"><Combo><svg width="22" height="22" viewBox="0 0 22 22"><path d="M2 1l14 2 2 10L3 12z" fill="#bfe4f5" stroke="#3d6fb8" /><circle cx="7" cy="6" r="1.5" fill="#d22" /><circle cx="13" cy="8" r="1.5" fill="#d22" /><rect x="1" y="16" width="20" height="5" fill="#eecb5e" stroke="#a48a2e" /></svg></Combo></div>
        <div className="ml-[5px]"><Combo><svg width="22" height="14" viewBox="0 0 22 14"><path d="M1 6l14-5 3 6-14 6z" fill="#f2dc9c" stroke="#a68a4a" /><path d="M6 7l7-3M7 9l7-3" stroke="#a68a4a" /><path d="M18 6l3 3" stroke="#c33" /></svg></Combo></div>
        <div className="ml-[5px]"><Combo><svg width="23" height="22" viewBox="0 0 23 22"><ellipse cx="6" cy="5" rx="3" ry="4" fill="none" stroke="#c79a2c" strokeWidth="2" /><ellipse cx="9" cy="11" rx="3" ry="4" fill="none" stroke="#c79a2c" strokeWidth="2" /><rect x="6" y="14" width="17" height="7" fill="#e8ecf7" stroke="#333" /><text x="8" y="20" fontSize="6.5" fontWeight="bold" fill="#1a1a5a" fontFamily="DejaVu Sans">P1=</text></svg></Combo></div>
        <div className="ml-[5px]"><ToolBtn><svg width="22" height="20" viewBox="0 0 22 20"><path d="M1 6h6l2-2h7v14H3z" fill="#d9b23e" stroke="#8e7420" /><path d="M4 9h17l-4 10H2z" fill="#f6e59a" stroke="#8e7420" /><path d="M12 1q5 0 5 5M17 7l-3-3h6z" fill="none" stroke="#1e8a3a" strokeWidth="1.6" /></svg></ToolBtn></div>
        <div className="ml-[5px]"><Combo><svg width="20" height="20" viewBox="0 0 20 20"><rect x="1" y="1" width="18" height="18" fill="#cfe0f7" stroke="#5a7fb5" /><path d="M4 5h2M4 10h2M4 15h2M8 5h9M8 10h9M8 15h9" stroke="#223c78" /></svg></Combo></div>
        <div className="ml-[4px]"><ToolBtn><svg width="22" height="20" viewBox="0 0 22 20"><rect x="7" y="1" width="14" height="12" fill="#f2f2f2" stroke="#3a6a3a" /><rect x="7" y="1" width="14" height="3" fill="#1e6e2e" /><path d="M7 7h14M7 10h14M12 4v9M17 4v9" stroke="#777" strokeWidth=".6" /><path d="M15 9l5 4M20 9l-5 4" stroke="#1e8a3a" strokeWidth="2" /><path d="M10 18a5 5 0 1 1-5-7" fill="none" stroke="#1b5fc8" strokeWidth="2" /></svg></ToolBtn></div>
        <div className="ml-[5px]"><ToolBtn><svg width="14" height="14" viewBox="0 0 14 14"><path d="M1 1l12 12M13 1L1 13" stroke="#333" strokeWidth="1.5" /></svg></ToolBtn></div>
      </div>

      <div className="mt-[7px] mx-[5px] h-[1px] bg-[#cfcfcf] shrink-0" />

      <div className="mt-[4px] pr-[13px] flex justify-end gap-[7px] text-[12.5px] shrink-0">
        <div className="w-[65px] h-[20px] flex items-center justify-center rounded-[3px] border border-[#3e7a3e] bg-linear-to-b from-[#aee29a] via-[#7fd070] to-[#5cbc50] text-[#123]">OK</div>
        <div className="w-[65px] h-[20px] flex items-center justify-center rounded-[3px] border border-[#808080] bg-linear-to-b from-[#f4f4f4] to-[#cfcfcf] text-[#222]">Apply</div>
        <div className="w-[66px] h-[20px] flex items-center justify-center rounded-[3px] border border-[#808080] bg-linear-to-b from-[#f4f4f4] to-[#cfcfcf] text-[#222]">Cancel</div>
      </div>

      <svg width="12" height="18" viewBox="0 0 12 18" className="absolute left-[307px] top-[202px]">
        <path d="M1 1v14l3.5-3.5L7 17l2.5-1L7 10.5h4.5z" fill="#fff" stroke="#222" />
      </svg>
    </div>
  );
}

export default function App() {
  return (
    <div className="relative w-[1356px] h-[846px] overflow-hidden flex flex-col bg-[#d8d8d8] font-['DejaVu_Sans',sans-serif]">
      <Ribbon />
      <Toolbar />
      <div className="flex-1 flex min-h-0">
        <LeftPane />
        <Viewport />
      </div>
      <div className="h-[18px] shrink-0 flex items-center bg-[#dcdcdc] border-t border-[#f0f0f0] text-[13px]">
        <span className="pl-[3px] w-[1263px] text-[#111] tracking-[0.08px] whitespace-nowrap [text-shadow:0_0_0.6px_#111]">Choose expression to edit, enter new expression, or select feature to edit parameters</span>
        <div className="w-[18px] self-stretch border-x border-[#cfcfcf]" />
        <span className="ml-[33px] w-[14px] h-[14px] bg-[#8d9ba3]" />
        <span className="ml-[3px] w-[14px] h-[14px] border border-[#777] bg-white flex items-center justify-center">
          <span className="w-[8px] h-[8px] bg-[#2a6fd8]" />
        </span>
      </div>
      <div className="absolute left-[5px] top-[577px] w-[23px] h-[9px] bg-[#dedede] border border-[#aaa] rounded-b-[2px]" />
      <Dialog />
    </div>
  );
}
